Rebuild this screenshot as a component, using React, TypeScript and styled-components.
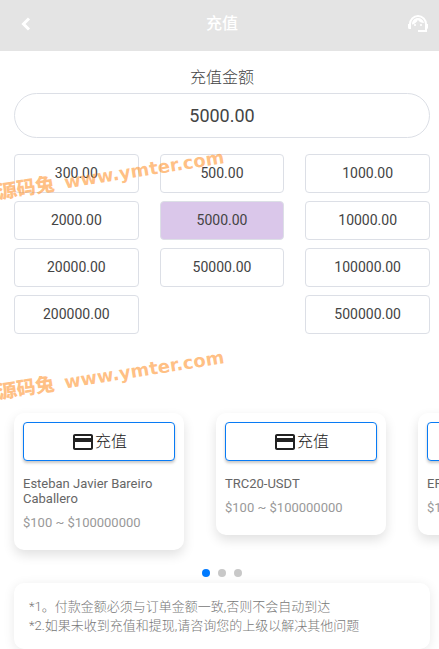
import React, { useState } from "react";
import styled, { createGlobalStyle } from "styled-components";
import { MdCreditCard } from "react-icons/md";

const GlobalStyle = createGlobalStyle`
  *, *::before, *::after { box-sizing: border-box; }
  body {
    margin: 0;
    background: #fff;
    color: #444;
    font-family: Roboto, "Noto Sans CJK SC", sans-serif;
    font-size: 14px;
    overflow-x: hidden;
  }
  button, input { font-family: inherit; color: inherit; margin: 0; }
`;

const Page = styled.div`
  position: relative;
  overflow: hidden;
`;

const Header = styled.header`
  display: grid;
  grid-template-columns: 24px 1fr 24px;
  align-items: center;
  height: 51px;
  padding: 0 9px 4px 14px;
  background: #e4e4e4;
  color: #fff;
`;

const Title = styled.h1`
  margin: 0;
  font-size: 16px;
  font-weight: 500;
  line-height: 24px;
  text-align: center;
`;

const IconButton = styled.button`
  display: flex;
  align-items: center;
  justify-content: center;
  width: 24px;
  height: 24px;
  padding: 0;
  border: 0;
  background: none;
  cursor: pointer;
  color: #fff;
`;

const Main = styled.main`
  padding: 15px 9px 0 14px;
`;

const AmountLabel = styled.label`
  display: block;
  color: #444;
  font-size: 16px;
  font-weight: 300;
  line-height: 24px;
  text-align: center;
`;

const AmountInput = styled.input`
  display: block;
  width: 100%;
  height: 45px;
  margin-top: 3px;
  padding: 0 16px;
  border: 1px solid #dcdfe6;
  border-radius: 23px;
  background: #fff;
  font-size: 18px;
  text-align: center;
  outline: none;
`;

const AmountGrid = styled.div`
  display: grid;
  grid-template-columns: repeat(3, 1fr);
  gap: 8px 21px;
  margin-top: 16px;
`;

const AmountButton = styled.button<{ $selected: boolean; $last: boolean }>`
  height: 39px;
  padding: 0 0 1px;
  border: 1px solid #dcdfe6;
  border-radius: 4px;
  background: ${(p) => (p.$selected ? "#dac7ea" : "#fff")};
  font-size: 14px;
  line-height: 20px;
  cursor: pointer;
  ${(p) => p.$last && "grid-column: 3;"}
`;

const Carousel = styled.section`
  display: flex;
  align-items: flex-start;
  gap: 32px;
  margin: 64px -9px 0 -14px;
  padding: 15px 9px 19px 14px;
  overflow: hidden;
`;

const Card = styled.article`
  flex: 0 0 170px;
  padding: 9px 9px 20px;
  border-radius: 10px;
  background: #fff;
  box-shadow: 0 5px 12px rgba(0, 0, 0, 0.12);
`;

const PayButton = styled.button`
  display: flex;
  align-items: center;
  justify-content: center;
  width: 100%;
  height: 39px;
  padding: 0;
  border: 1px solid #087bf5;
  border-radius: 4px;
  background: #fff;
  box-shadow: 0 2px 3px rgba(0, 0, 0, 0.22);
  color: #222;
  font-size: 16px;
  font-weight: 300;
  line-height: 24px;
  cursor: pointer;
`;

const ChannelName = styled.h2`
  margin: 15px 0 0;
  color: #666;
  font-size: 13px;
  font-weight: 400;
  line-height: 15px;
`;

const ChannelRange = styled.p`
  margin: 9px 0 0;
  color: #999;
  font-size: 13px;
  line-height: 15px;
`;

const Dots = styled.nav`
  display: flex;
  justify-content: center;
  gap: 8px;
`;

const Dot = styled.button<{ $active: boolean }>`
  width: 8px;
  height: 8px;
  padding: 0;
  border: 0;
  border-radius: 50%;
  background: ${(p) => (p.$active ? "#007aff" : "#c8c8c8")};
  cursor: pointer;
`;

const Notice = styled.section`
  margin-top: 6px;
  padding: 14px 15px;
  border-radius: 10px;
  background: #fff;
  box-shadow: 0 2px 12px rgba(0, 0, 0, 0.09);
  color: #777;
  font-size: 13px;
  font-weight: 300;
  line-height: 19px;
`;

const NoticeLine = styled.p`
  margin: 0;
`;

const Watermark = styled.div<{ $top: number }>`
  position: absolute;
  top: ${(p) => p.$top}px;
  left: -2px;
  display: flex;
  align-items: center;
  gap: 10px;
  height: 24px;
  transform: rotate(-9deg);
  transform-origin: 0 50%;
  color: rgba(255, 150, 50, 0.6);
  font-size: 19px;
  font-weight: 900;
  line-height: 24px;
  white-space: nowrap;
  pointer-events: none;
`;

const WatermarkUrl = styled.span`
  font-family: "DejaVu Sans", sans-serif;
  font-size: 18px;
  font-weight: 700;
`;

const amounts = [
  "300.00", "500.00", "1000.00",
  "2000.00", "5000.00", "10000.00",
  "20000.00", "50000.00", "100000.00",
  "200000.00", "500000.00",
];

const channels = [
  { name: "Esteban Javier Bareiro Caballero", range: "$100 ~ $100000000" },
  { name: "TRC20-USDT", range: "$100 ~ $100000000" },
  { name: "ERC20-USDT", range: "$100 ~ $100000000" },
];

function AgentIcon() {
  return (
    <svg width="24" height="24" viewBox="0 0 24 24" fill="none" stroke="currentColor">
      <path d="M4 14v-2a8 8 0 0 1 16 0v7h-8" strokeWidth="2" />
      <path d="M2 12h3v5H3.500a1.500 1.500 0 0 1-1.500-1.500zM19 12h3v3.500a1.500 1.500 0 0 1-1.500 1.500H19z" fill="currentColor" stroke="none" />
      <path d="M6 12.500C6 8.500 8.500 6 12 6c3.200 0 5.500 2 6 5-2.500 0-4.800-1.200-6.100-3.300C11 10 9 12 6 12.500z" fill="currentColor" stroke="none" />
      <circle cx="9" cy="13" r="1.100" fill="currentColor" stroke="none" />
      <circle cx="15" cy="13" r="1.100" fill="currentColor" stroke="none" />
    </svg>
  );
}

export default function App() {
  const [amount, setAmount] = useState("5000.00");
  const [slide, setSlide] = useState(0);

  return (
    <Page>
      <GlobalStyle />
      <Header>
        <IconButton aria-label="返回">
          <svg width="24" height="24" viewBox="0 0 24 24" fill="none" stroke="currentColor" strokeWidth="3">
            <path d="M15 6.5 9.5 12 15 17.5" />
          </svg>
        </IconButton>
        <Title>充值</Title>
        <IconButton aria-label="客服">
          <AgentIcon />
        </IconButton>
      </Header>
      <Main>
        <AmountLabel htmlFor="amount">充值金额</AmountLabel>
        <AmountInput
          id="amount"
          inputMode="decimal"
          value={amount}
          onChange={(e) => setAmount(e.target.value)}
        />
        <AmountGrid>
          {amounts.map((value, i) => (
            <AmountButton
              key={value}
              $selected={value === amount}
              $last={i === amounts.length - 1}
              onClick={() => setAmount(value)}
            >
              {value}
            </AmountButton>
          ))}
        </AmountGrid>
        <Carousel>
          {channels.map((channel) => (
            <Card key={channel.name}>
              <PayButton>
                <MdCreditCard size={24} />
                充值
              </PayButton>
              <ChannelName>{channel.name}</ChannelName>
              <ChannelRange>{channel.range}</ChannelRange>
            </Card>
          ))}
        </Carousel>
        <Dots>
          {channels.map((channel, i) => (
            <Dot
              key={channel.name}
              $active={i === slide}
              aria-label={channel.name}
              onClick={() => setSlide(i)}
            />
          ))}
        </Dots>
        <Notice>
          <NoticeLine>*1。付款金额必须与订单金额一致,否则不会自动到达</NoticeLine>
          <NoticeLine>*2.如果未收到充值和提现,请咨询您的上级以解决其他问题</NoticeLine>
        </Notice>
      </Main>
      {[181, 381].map((top) => (
        <Watermark key={top} $top={top} aria-hidden="true">
          源码兔<WatermarkUrl>www.ymter.com</WatermarkUrl>
        </Watermark>
      ))}
    </Page>
  );
}
